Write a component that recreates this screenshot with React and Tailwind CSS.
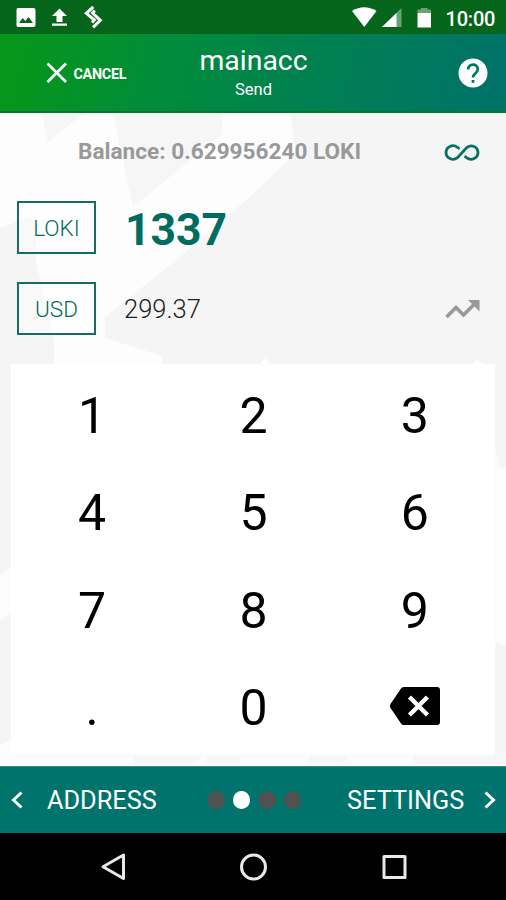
import React from 'react';

const KEYS = ['1', '2', '3', '4', '5', '6', '7', '8', '9', '.', '0'];

function Backdrop() {
  return (
    <svg className="absolute inset-0 -z-10" width="506" height="653" viewBox="0 113 506 653">
      <rect y="113" width="506" height="653" fill="#f5f5f5" />
      <path d="M0 113H290L296 152L280 168L253 194L174 262L105 317V338L162 356V366H54V340L36 262V215L0 228Z" fill="#fdfdfd" />
      <path d="M42 113H84L48 142ZM113 113H222V134L133 207L125 170Z" fill="#f6f6f6" />
      <path d="M0 575L12 566V613L0 621ZM494 444L500 468L506 466V646L494 642ZM0 745L12 740V752H506V766H0Z" fill="#fcfcfc" />
      <path d="M260 364L265 358L270 364ZM472 364L477 360L484 364Z" fill="#fff" />
      <path d="M134 755H202L195 763H134ZM208 755H240V763H205ZM312 755H348L345 762H306ZM413 755H494V748H506V764H413Z" fill="#f6f6f6" />
    </svg>
  );
}

function StatusBar() {
  return (
    <div className="flex h-[34px] bg-[#05651a]">
      <svg width="506" height="34" fill="#fff">
        <path fillRule="evenodd" d="M18 8H33.500Q35.500 8 35.500 10V25Q35.500 27 33.500 27H18Q16.500 27 16.500 25V10Q16.500 8 18 8ZM19 23H33L28.500 17L25.300 21L22.700 18Z" />
        <path d="M59.500 8.500L67 16H62.500V22H56.500V16H52ZM52 23.500H67V25.700H52Z" />
        <path d="M93.300 6.800L86.300 13.300L94.300 20L92 22.500M94.800 10.500L92.600 13L100.300 20.300L93 27.300" fill="none" stroke="#fff" strokeWidth="3" />
        <path d="M352 11Q364 3.500 376.500 11L364.300 27Z" />
        <path d="M401.500 8V27H382Z" opacity=".4" />
        <path d="M396.500 13V27H382Z" />
        <path d="M417.500 9.500H421V8H427.500V9.500H431V13H417.500Z" opacity=".4" />
        <path d="M417.500 13H431V27.500H417.500Z" />
      </svg>
      <span className="-ml-[60.500px] mt-[8.500px] h-5 w-[60.500px] text-[20px] leading-5 font-medium tracking-[-0.200px] text-white">10:00</span>
    </div>
  );
}

function Header() {
  return (
    <header className="grid h-[79px] grid-cols-[200px_107px_199px] border-b-2 border-[#047832] bg-[linear-gradient(105deg,#06961b_5%,#008c3b_33%,#008150_60%,#007368_96%)] text-white">
      <div className="flex items-center pl-[46px]">
        <svg width="22" height="22" viewBox="0 0 22 22" fill="none" stroke="#fff" strokeWidth="2.700">
          <path d="M1.500 1.500L20 20M20 1.500L1.500 20" />
        </svg>
        <span className="mt-[4px] ml-[5.500px] text-[14.400px] font-bold tracking-[-0.300px]">CANCEL</span>
      </div>
      <div className="flex flex-col items-center">
        <h1 className="mt-[9.500px] text-[28.400px] leading-[34px] font-normal whitespace-nowrap">mainacc</h1>
        <span className="mt-[2.500px] text-[16.500px] leading-5">Send</span>
      </div>
      <div className="flex items-center justify-end pr-[18px] pt-px">
        <svg width="30" height="30" viewBox="0 0 30 30">
          <circle cx="15" cy="15" r="14.500" fill="#fff" />
          <path d="M10.200 11.500C10.200 5 19.800 5 19.800 11.300C19.800 15.200 15 15.300 15 19.500" fill="none" stroke="#007660" strokeWidth="2.700" />
          <rect x="13.600" y="22" width="2.800" height="2.800" fill="#007660" />
        </svg>
      </div>
    </header>
  );
}

function CurrencyButton({ children }) {
  return (
    <button className="flex h-[53px] w-[79px] items-center justify-center border-2 border-[#176d61] bg-white/40 pt-px text-[22.500px] leading-none font-light text-[#006b5d]">
      {children}
    </button>
  );
}

export default function App() {
  return (
    <div className="h-[900px] w-[506px] overflow-hidden bg-white font-[Roboto,sans-serif]">
      <StatusBar />
      <Header />
      <main className="relative isolate h-[653px]">
        <Backdrop />
        <div className="flex h-[88px] items-start justify-between pr-[26px] pl-[78px]">
          <span className="mt-[25px] text-[22.600px] leading-7 font-bold whitespace-nowrap text-[#999]">Balance: 0.629956240 LOKI</span>
          <svg className="mt-[31px]" width="36" height="17" viewBox="0 0 36 17" fill="none" stroke="#087164" strokeWidth="2.800">
            <path d="M15.500 5L13.500 3.300C8.500-.5 2 3 2 8.500C2 14 8.500 17.500 13.500 13.700L22.500 3.800C27.500-.5 34 3 34 8.500C34 14 27.500 17.500 22.500 13.700L20.500 12" />
          </svg>
        </div>
        <div className="flex h-[81px] items-start pl-[17px]">
          <CurrencyButton>LOKI</CurrencyButton>
          <span className="mt-[3px] ml-[29px] text-[44.500px] leading-[53px] font-bold text-[#006c60]">1337</span>
        </div>
        <div className="flex h-[82px] items-start pr-[26px] pl-[17px]">
          <CurrencyButton>USD</CurrencyButton>
          <span className="mt-[1px] ml-[28px] grow text-[25.500px] leading-[53px] font-light text-[#222]">299.37</span>
          <svg className="mt-[18px]" width="35" height="19" viewBox="0 0 35 19" fill="none" stroke="#999" strokeWidth="3.700">
            <path d="M1.500 17L11 7.500L18.500 15L29 4.500" />
            <path d="M23 0H34.500V11.500Z" fill="#999" stroke="none" />
          </svg>
        </div>
        <div className="mx-[11px] grid h-[390px] w-[484px] grid-cols-3 grid-rows-4 bg-white">
          {KEYS.map((key) => (
            <button key={key} className="flex items-center justify-center pt-[6px] pl-px text-[50px] leading-none text-black">{key}</button>
          ))}
          <button className="flex items-center justify-center">
            <svg className="mt-px ml-[2px]" width="50" height="38" viewBox="0 0 50 38">
              <path d="M13.500 0H47Q50 0 50 3V35Q50 38 47 38H13.500Q12 38 11 36.500L.5 21Q-.5 19 .5 17L11 1.500Q12 0 13.500 0Z" />
              <path d="M19.500 10L37.500 28M37.500 10L19.500 28" stroke="#fff" strokeWidth="4.500" />
            </svg>
          </button>
        </div>
      </main>
      <footer className="flex h-[67px] items-center border-t border-[#338b83] bg-[#00736c] text-[25.300px] text-white">
        <svg className="ml-[11px]" width="12" height="18" viewBox="0 0 12 18" fill="none" stroke="#fff" strokeWidth="3">
          <path d="M10.500 1.500L2.500 9L10.500 16.500" />
        </svg>
        <span className="mt-[2px] ml-[24px] w-[160px]">ADDRESS</span>
        <div className="flex gap-[8px]">
          <i className="size-[17.500px] rounded-full bg-[#4e5250]" />
          <i className="size-[17.500px] rounded-full bg-white" />
          <i className="size-[17.500px] rounded-full bg-[#4e5250]" />
          <i className="size-[17.500px] rounded-full bg-[#4e5250]" />
        </div>
        <span className="mt-[2px] ml-[46px] w-[120px]">SETTINGS</span>
        <svg className="ml-[17px]" width="12" height="18" viewBox="0 0 12 18" fill="none" stroke="#fff" strokeWidth="3">
          <path d="M1.500 1.500L9.500 9L1.500 16.500" />
        </svg>
      </footer>
      <nav className="h-[67px] bg-black">
        <svg width="506" height="67" viewBox="0 0 506 67" fill="none" stroke="#e8e8e8" strokeWidth="3" strokeLinejoin="round">
          <path d="M123.500 22L103 33.800L123.500 45.500Z" />
          <circle cx="253.500" cy="34" r="12" />
          <path d="M384 23.500H405V44.500H384Z" />
        </svg>
      </nav>
    </div>
  );
}
